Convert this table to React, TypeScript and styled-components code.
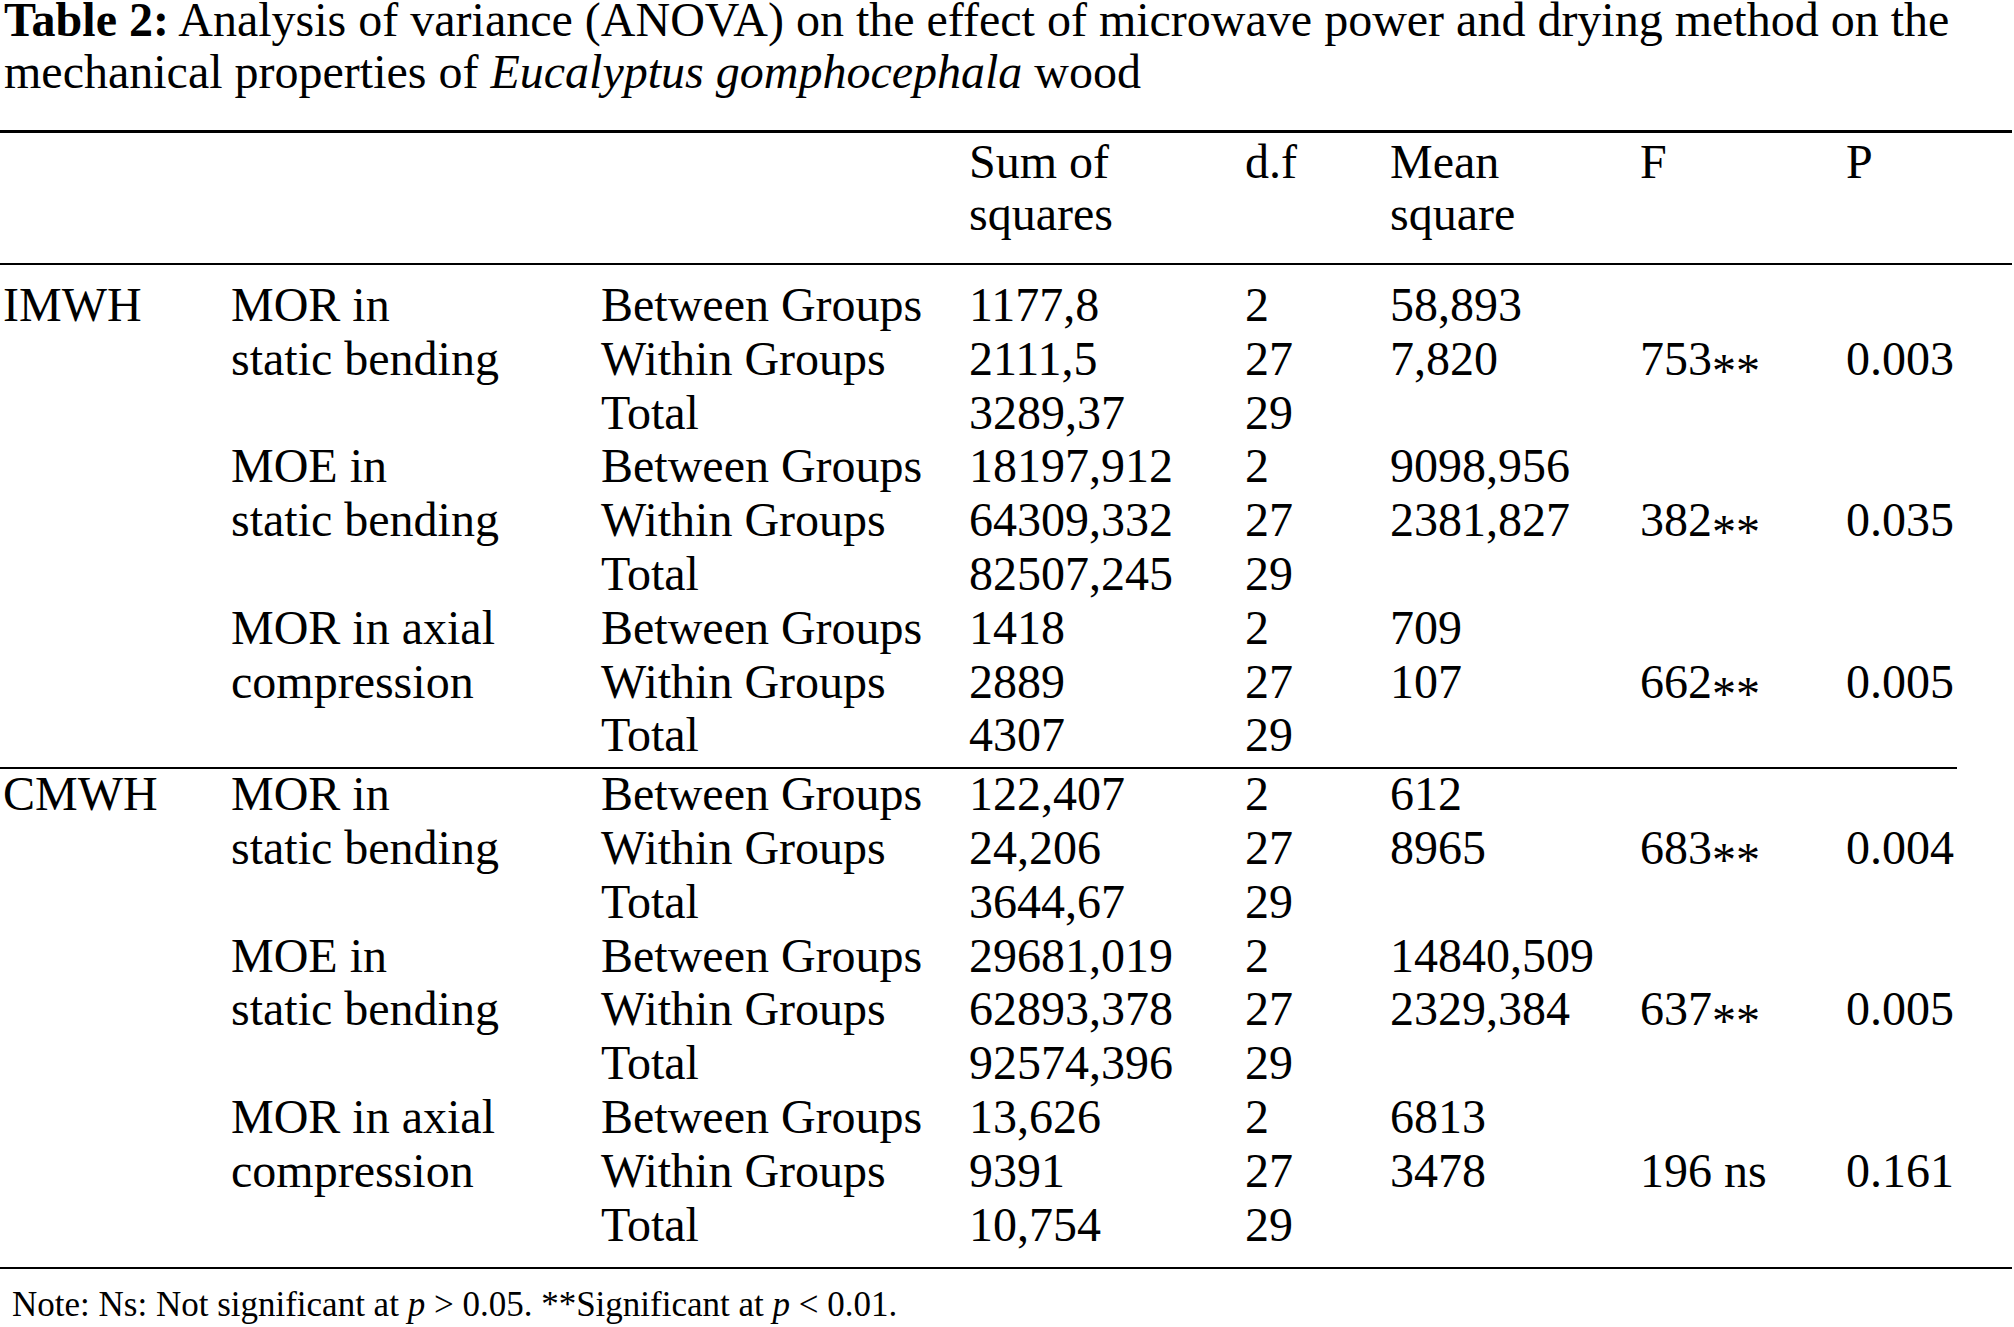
import React from "react";
import styled, { createGlobalStyle } from "styled-components";

const GlobalStyle = createGlobalStyle`
  html, body {
    margin: 0;
    padding: 0;
    background: #fff;
  }
  body {
    color: #000;
    font-family: "Liberation Serif", "Times New Roman", "DejaVu Serif", serif;
  }
`;

const Page = styled.div`
  width: 2014px;
`;

const Caption = styled.p`
  margin: -6px 0 32px 0;
  padding-left: 4px;
  font-size: 48px;
  line-height: 52px;
`;

const CaptionLabel = styled.b`
  font-weight: 700;
`;

const Table = styled.div`
  width: 2012px;
  border-top: 3px solid #000;
  border-bottom: 2px solid #000;
  font-size: 48px;
`;

const Grid = styled.div`
  display: grid;
  grid-template-columns: 228px 370px 368px 276px 145px 250px 206px 1fr;
  padding-left: 3px;
`;

const HeaderRow = styled(Grid)`
  padding: 3px 0 23px 3px;
  border-bottom: 2px solid #000;
  line-height: 52px;
`;

const HeadCell = styled.div<{ $col: number }>`
  grid-column: ${(p) => p.$col};
  white-space: pre-line;
`;

const GroupBody = styled(Grid)<{ $top: number; $bottom: number }>`
  grid-auto-rows: 53.8px;
  line-height: 53.8px;
  margin-top: ${(p) => p.$top}px;
  padding-bottom: ${(p) => p.$bottom}px;
`;

const Cell = styled.div<{ $col: number; $row: number; $span?: number }>`
  grid-column: ${(p) => p.$col};
  grid-row: ${(p) => p.$row} / span ${(p) => p.$span || 1};
  white-space: nowrap;
`;

const Stars = styled.span`
  vertical-align: -0.24em;
  line-height: 0;
`;

const Divider = styled.div`
  width: 1957px;
  height: 2px;
  margin-top: 5px;
  background: #000;
`;

const Note = styled.p`
  margin: 16px 0 0 0;
  padding-left: 12px;
  font-size: 35px;
  line-height: 40px;
`;

type Block = {
  label: string[];
  rows: string[][];
  f: string;
  stars?: boolean;
  p: string;
};

type Group = { name: string; blocks: Block[] };

const groups: Group[] = [
  {
    name: "IMWH",
    blocks: [
      {
        label: ["MOR in", "static bending"],
        rows: [
          ["Between Groups", "1177,8", "2", "58,893"],
          ["Within Groups", "2111,5", "27", "7,820"],
          ["Total", "3289,37", "29", ""],
        ],
        f: "753",
        stars: true,
        p: "0.003",
      },
      {
        label: ["MOE in", "static bending"],
        rows: [
          ["Between Groups", "18197,912", "2", "9098,956"],
          ["Within Groups", "64309,332", "27", "2381,827"],
          ["Total", "82507,245", "29", ""],
        ],
        f: "382",
        stars: true,
        p: "0.035",
      },
      {
        label: ["MOR in axial", "compression"],
        rows: [
          ["Between Groups", "1418", "2", "709"],
          ["Within Groups", "2889", "27", "107"],
          ["Total", "4307", "29", ""],
        ],
        f: "662",
        stars: true,
        p: "0.005",
      },
    ],
  },
  {
    name: "CMWH",
    blocks: [
      {
        label: ["MOR in", "static bending"],
        rows: [
          ["Between Groups", "122,407", "2", "612"],
          ["Within Groups", "24,206", "27", "8965"],
          ["Total", "3644,67", "29", ""],
        ],
        f: "683",
        stars: true,
        p: "0.004",
      },
      {
        label: ["MOE in", "static bending"],
        rows: [
          ["Between Groups", "29681,019", "2", "14840,509"],
          ["Within Groups", "62893,378", "27", "2329,384"],
          ["Total", "92574,396", "29", ""],
        ],
        f: "637",
        stars: true,
        p: "0.005",
      },
      {
        label: ["MOR in axial", "compression"],
        rows: [
          ["Between Groups", "13,626", "2", "6813"],
          ["Within Groups", "9391", "27", "3478"],
          ["Total", "10,754", "29", ""],
        ],
        f: "196 ns",
        p: "0.161",
      },
    ],
  },
];

const GroupRows = ({ group }: { group: Group }) => (
  <>
    <Cell $col={1} $row={1}>
      {group.name}
    </Cell>
    {group.blocks.map((b, i) => {
      const base = i * 3 + 1;
      return (
        <React.Fragment key={i}>
          <Cell $col={2} $row={base} $span={2}>
            {b.label.map((l) => (
              <div key={l}>{l}</div>
            ))}
          </Cell>
          {b.rows.map((r, j) =>
            r.map((v, k) => (
              <Cell key={`${j}-${k}`} $col={k + 3} $row={base + j}>
                {v}
              </Cell>
            ))
          )}
          <Cell $col={7} $row={base + 1}>
            {b.f}
            {b.stars && <Stars>**</Stars>}
          </Cell>
          <Cell $col={8} $row={base + 1}>
            {b.p}
          </Cell>
        </React.Fragment>
      );
    })}
  </>
);

export default function App() {
  return (
    <Page>
      <GlobalStyle />
      <Caption>
        <CaptionLabel>Table 2:</CaptionLabel> Analysis of variance (ANOVA) on the effect of microwave power and drying
        method on the mechanical properties of <i>Eucalyptus gomphocephala</i> wood
      </Caption>
      <Table>
        <HeaderRow>
          <HeadCell $col={4}>{"Sum of\nsquares"}</HeadCell>
          <HeadCell $col={5}>d.f</HeadCell>
          <HeadCell $col={6}>{"Mean\nsquare"}</HeadCell>
          <HeadCell $col={7}>F</HeadCell>
          <HeadCell $col={8}>P</HeadCell>
        </HeaderRow>
        <GroupBody $top={13} $bottom={0}>
          <GroupRows group={groups[0]} />
        </GroupBody>
        <Divider />
        <GroupBody $top={-2} $bottom={16}>
          <GroupRows group={groups[1]} />
        </GroupBody>
      </Table>
      <Note>
        Note: Ns: Not significant at <i>p</i> &gt; 0.05. **Significant at <i>p</i> &lt; 0.01.
      </Note>
    </Page>
  );
}
